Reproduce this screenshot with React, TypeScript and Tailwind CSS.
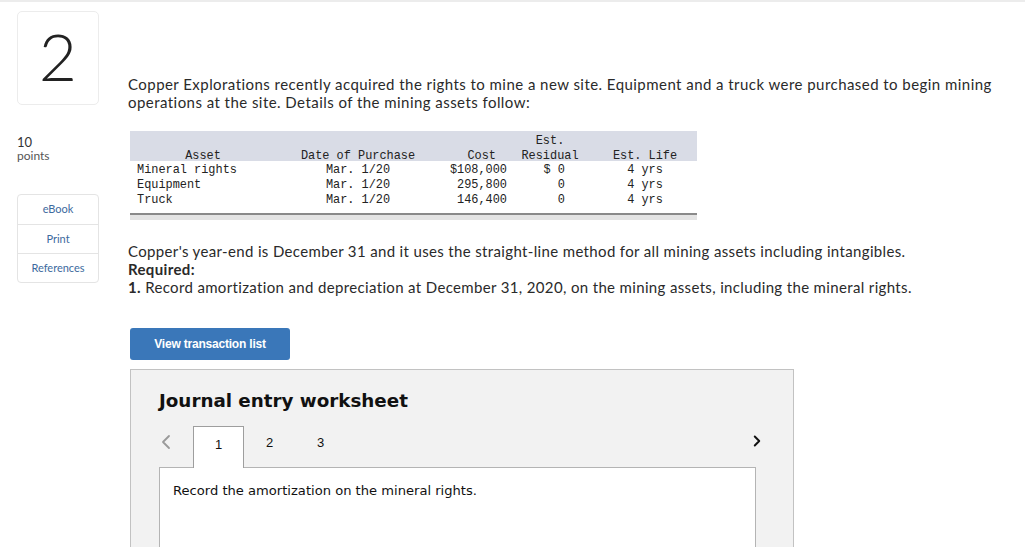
import { ChevronLeft, ChevronRight } from 'lucide-react'

const rows = [
  { asset: 'Mineral rights', date: 'Mar. 1/20', cost: '$108,000', res: '$ 0', life: '4 yrs' },
  { asset: 'Equipment', date: 'Mar. 1/20', cost: '295,800', res: '0', life: '4 yrs' },
  { asset: 'Truck', date: 'Mar. 1/20', cost: '146,400', res: '0', life: '4 yrs' },
]

function AssetTable() {
  return (
    <div className="w-[567px] ml-[2px] mt-[20px] font-['Liberation_Mono',monospace] text-[11.9px] leading-[15px] text-[#222] tracking-normal">
      <div className="bg-[#d9dce6] h-[30px] flex items-end">
        <div className="flex w-full -mb-[3px]">
          <div className="w-[146px] text-center self-end">Asset</div>
          <div className="w-[164px] text-center self-end">Date of Purchase</div>
          <div className="w-[75px] text-right pr-[19px] self-end">Cost</div>
          <div className="w-[70px] text-center">Est.<br />Residual</div>
          <div className="w-[112px] text-center pl-[8px] self-end">Est. Life</div>
        </div>
      </div>
      <div className="pt-[2px] pb-[5px]">
        {rows.map((r) => (
          <div key={r.asset} className="flex">
            <div className="w-[146px] pl-[7px]">{r.asset}</div>
            <div className="w-[164px] text-center">{r.date}</div>
            <div className="w-[75px] text-right pr-[8px]">{r.cost}</div>
            <div className="w-[70px] text-right pr-[20px]">{r.res}</div>
            <div className="w-[112px] text-center pl-[8px]">{r.life}</div>
          </div>
        ))}
      </div>
      <div className="h-[7px] border-t-2 border-[#8a8a8a] bg-[#e4e4e4]" />
    </div>
  )
}

function Worksheet() {
  return (
    <div className="ml-[2px] mt-[9px] w-[664px] h-[190px] bg-[#f2f2f2] border border-[#c2c2c2] border-b-0 pl-[28px] pr-[37px] tracking-normal">
      <div className="pt-[20px] font-['DejaVu_Sans',sans-serif] font-bold text-[18.3px] leading-[22px] text-[#111]">
        Journal entry worksheet
      </div>
      <div className="mt-[13px] flex items-end h-[42px] relative">
        <ChevronLeft className="w-[24px] h-[24px] text-[#9a9a9a] mb-[13px] -ml-[5px]" strokeWidth={1.8} />
        <div className="ml-[15px] w-[51px] h-[42px] bg-white border border-b-0 border-[#9e9e9e] flex justify-center pt-[9px] font-['Liberation_Sans',sans-serif] text-[13px] text-[#111] relative z-10 -mb-[1px]">
          1
        </div>
        <div className="w-[51px] h-[42px] flex justify-center pt-[9px] font-['Liberation_Sans',sans-serif] text-[13px] text-[#111]">2</div>
        <div className="w-[51px] h-[42px] flex justify-center pt-[9px] font-['Liberation_Sans',sans-serif] text-[13px] text-[#111]">3</div>
        <div className="flex-1" />
        <ChevronRight className="w-[18px] h-[18px] text-[#111] mb-[17px] mr-[-10px]" strokeWidth={2.6} />
      </div>
      <div className="bg-white border border-b-0 border-[#b4b4b4] h-[90px] pl-[13px] pt-[14px] font-['DejaVu_Sans',sans-serif] text-[13.1px] text-[#111]">
        Record the amortization on the mineral rights.
      </div>
    </div>
  )
}

export default function App() {
  return (
    <div className="w-[1025px] h-[547px] overflow-hidden bg-white border-t-2 border-[#ececec] font-['Lato',sans-serif] relative">
      <div className="flex">
        {/* left rail */}
        <div className="w-[128px] shrink-0 pl-[17px] pt-[9px]">
          <div className="w-[82px] h-[94px] rounded-[5px] border border-[#ececec] flex items-center justify-center text-[66px] font-light text-[#222] leading-none pb-[4px]">
            2
          </div>
          <div className="mt-[30px] text-[13px] leading-[14px] text-[#333]">10</div>
          <div className="text-[12px] leading-[14px] text-[#555]">points</div>
          <div className="mt-[31px] w-[82px] rounded-[4px] border border-[#e4e4e4] text-[11px] text-[#3d6a9e]">
            <div className="h-[30px] flex items-center justify-center border-b border-[#e4e4e4]">eBook</div>
            <div className="h-[29px] flex items-center justify-center border-b border-[#e4e4e4]">Print</div>
            <div className="h-[28px] flex items-center justify-center">References</div>
          </div>
        </div>

        {/* main */}
        <div className="flex-1 pt-[73px] text-[15px] leading-[18px] text-[#2a2a2a] tracking-[0.45px]">
          <p className="w-[880px]">
            Copper Explorations recently acquired the rights to mine a new site. Equipment and a truck were purchased to begin mining operations at the site. Details of the mining assets follow:
          </p>
          <AssetTable />
          <div className="mt-[22px] tracking-[0.35px]">
            <p>
              Copper's year-end is December 31 and it uses the straight-line method for all mining assets including intangibles.
            </p>
            <p className="font-bold">Required:</p>
            <p>
              <span className="font-bold">1.</span> Record amortization and depreciation at December 31, 2020, on the mining assets, including the mineral rights.
            </p>
          </div>
          <button className="ml-[2px] mt-[32px] w-[160px] h-[32px] rounded-[3px] bg-[#3a77b9] text-white font-['Liberation_Sans',sans-serif] font-bold text-[12px] tracking-[-0.2px]">
            View transaction list
          </button>
          <Worksheet />
        </div>
      </div>
    </div>
  )
}
